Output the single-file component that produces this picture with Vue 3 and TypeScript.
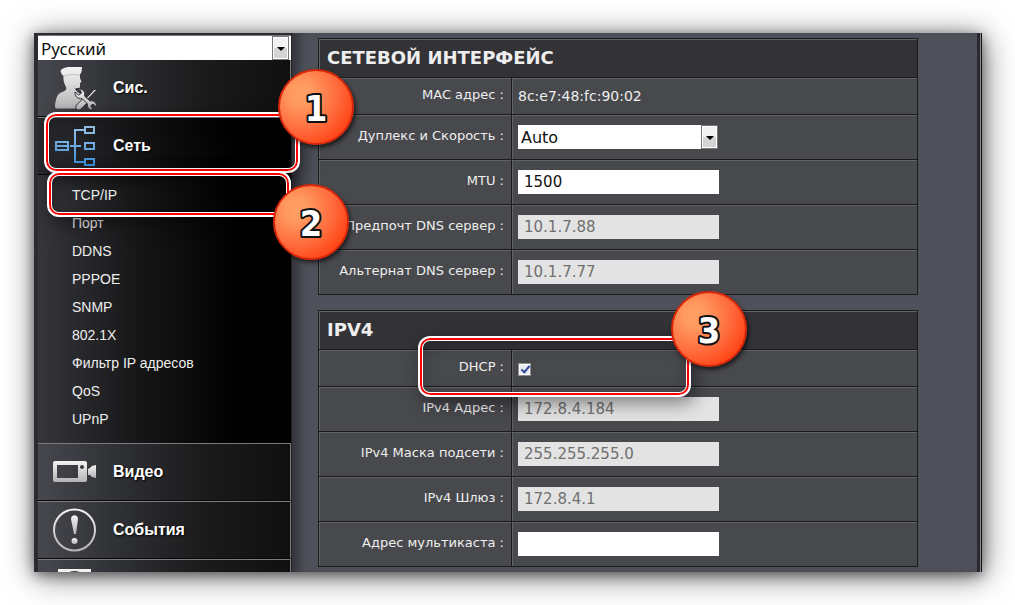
<script setup lang="ts">
import { ref } from 'vue'

interface Field {
  id: string
  label: string
  kind: 'text' | 'input' | 'select' | 'check'
  value: string
  disabled?: boolean
}
interface Section {
  title: string
  fields: Field[]
}

const language = ref('Русский')
const dhcp = ref(true)
const subItems: string[] = ['TCP/IP', 'Порт', 'DDNS', 'PPPOE', 'SNMP', '802.1X', 'Фильтр IP адресов', 'QoS', 'UPnP']

const sections = ref<Section[]>([
  {
    title: 'СЕТЕВОЙ ИНТЕРФЕЙС',
    fields: [
      { id: 'mac', label: 'MAC адрес :', kind: 'text', value: '8c:e7:48:fc:90:02' },
      { id: 'duplex', label: 'Дуплекс и Скорость :', kind: 'select', value: 'Auto' },
      { id: 'mtu', label: 'MTU :', kind: 'input', value: '1500' },
      { id: 'dns1', label: 'Предпочт DNS сервер :', kind: 'input', value: '10.1.7.88', disabled: true },
      { id: 'dns2', label: 'Альтернат DNS сервер :', kind: 'input', value: '10.1.7.77', disabled: true },
    ],
  },
  {
    title: 'IPV4',
    fields: [
      { id: 'dhcp', label: 'DHCP :', kind: 'check', value: '' },
      { id: 'ip', label: 'IPv4 Адрес :', kind: 'input', value: '172.8.4.184', disabled: true },
      { id: 'mask', label: 'IPv4 Маска подсети :', kind: 'input', value: '255.255.255.0', disabled: true },
      { id: 'gw', label: 'IPv4 Шлюз :', kind: 'input', value: '172.8.4.1', disabled: true },
      { id: 'mcast', label: 'Адрес мультикаста :', kind: 'input', value: '' },
    ],
  },
])
</script>

<template>
  <div class="page">
    <svg class="defs" width="0" height="0" aria-hidden="true">
      <defs>
        <linearGradient id="silver" x1="0" y1="0" x2="0" y2="1">
          <stop offset="0" stop-color="#f4f4f4" /><stop offset="1" stop-color="#b4b4b6" />
        </linearGradient>
        <linearGradient id="azure" gradientUnits="userSpaceOnUse" x1="0" y1="8" x2="0" y2="48">
          <stop offset="0" stop-color="#9cc4ea" /><stop offset="1" stop-color="#3a8fdc" />
        </linearGradient>
      </defs>
    </svg>
    <div class="frame">
      <nav class="sidebar">
        <div class="pick lang">
          <select v-model="language" aria-label="Язык">
            <option>Русский</option>
          </select>
          <span class="arrow"></span>
        </div>
        <button class="item first" type="button">
          <svg class="icon" width="46" height="56" viewBox="0 0 46 56" fill="url(#silver)">
            <path d="M8.500 11C10 8 14 7 18 7L30 7L29.500 12L28 14.500L28 18L29.500 22L28 23L28 27C27 29 25 28.500 23 28.500C24 31 26 33 29 34L35 40L24 48.500H5C3 48.500 3 47 3 45C4 39 5 34 9 32.500C13 31 15 30 14 27C12 23 11 20 11.500 16C10 15 9 13 8.500 11Z" />
            <g stroke="#303135" stroke-width="1">
              <path d="M42.500 29L44 30.500L35.500 39.500L36 42L29 49C26 51.500 22 48 24.500 45L31.500 38L34 38.500Z" />
              <path d="M24 28.500L28 29C32 30 33.500 33 32.500 36L38 41C42 40 45 43 44.500 47L41 44L38.500 46L41.500 49.500C37 50 35 47.500 35.500 44L30 38.500C26 39.500 22.500 36 23 32L26.500 35L29.500 33L28.500 30.500Z" />
            </g>
            <path d="M12 16Q20 13 28 15" fill="none" stroke="#c4c4c6" stroke-width="1" />
          </svg>
          <span>Сис.</span>
        </button>
        <div class="holder">
          <button class="item active" type="button">
            <svg class="icon" width="46" height="56" viewBox="0 0 46 56" fill="none" stroke="url(#azure)" stroke-width="2">
              <path d="M4 24H16V32H4ZM5 28H15M18 28H29M32 12H23V44H32M33 9H42V15H33ZM33 25H42V31H33ZM33 41H42V47H33Z" />
            </svg>
            <span>Сеть</span>
          </button>
          <div class="callout c1"><span class="badge"><svg width="76" height="76" viewBox="0 0 76 76"><text x="38" y="52">1</text></svg></span></div>
        </div>
        <ul class="sub">
          <li v-for="(s, i) in subItems" :key="s">
            <a href="#">{{ s }}</a>
            <div v-if="i === 0" class="callout c2"><span class="badge"><svg width="76" height="76" viewBox="0 0 76 76"><text x="38" y="52">2</text></svg></span></div>
          </li>
        </ul>
        <button class="item" type="button">
          <svg class="icon" width="46" height="56" viewBox="0 0 46 56" fill="url(#silver)">
            <path fill-rule="evenodd" d="M3 17H33Q35 17 35 19V36Q35 38 33 38H3Q1 38 1 36V19Q1 17 3 17ZM5 21V34H26V21ZM30 21A2 2 0 1 0 30.010 21Z" />
            <path d="M36 25L38 24L40 22L44 21V34L40 33L38 31L36 31Z" />
          </svg>
          <span>Видео</span>
        </button>
        <button class="item" type="button">
          <svg class="icon" width="46" height="56" viewBox="0 0 46 56" fill="url(#silver)">
            <circle cx="22.500" cy="28" r="20.500" fill="none" stroke="url(#silver)" stroke-width="2" />
            <path d="M19 17C19 12 26 12 26 17L24 32H22Z" /><circle cx="22.500" cy="39" r="3" />
          </svg>
          <span>События</span>
        </button>
        <button class="item" type="button" aria-label="Запись">
          <svg class="icon" width="46" height="56" viewBox="0 0 46 56" fill="url(#silver)">
            <path fill-rule="evenodd" d="M6 9H39V48H6ZM22.500 11A14 14 0 1 0 22.510 11Z" />
          </svg>
        </button>
      </nav>
      <main class="content">
        <table v-for="sec in sections" :key="sec.title">
          <colgroup>
            <col class="col-name" />
            <col />
          </colgroup>
          <thead>
            <tr><th colspan="2" scope="colgroup">{{ sec.title }}</th></tr>
          </thead>
          <tbody>
            <tr v-for="f in sec.fields" :key="f.id" :class="f.kind">
              <td class="name">
                <label :for="f.id">{{ f.label }}</label>
              </td>
              <td class="val">
                <output v-if="f.kind === 'text'" :id="f.id">{{ f.value }}</output>
                <div v-else-if="f.kind === 'select'" class="pick">
                  <select :id="f.id" v-model="f.value">
                    <option>Auto</option>
                  </select>
                  <span class="arrow"></span>
                </div>
                <template v-else-if="f.kind === 'check'">
                  <input :id="f.id" v-model="dhcp" type="checkbox" />
                  <div class="callout c3"><span class="badge"><svg width="76" height="76" viewBox="0 0 76 76"><text x="38" y="52">3</text></svg></span></div>
                </template>
                <input v-else :id="f.id" v-model="f.value" type="text" :disabled="f.disabled" />
              </td>
            </tr>
          </tbody>
        </table>
      </main>
    </div>
  </div>
</template>

<style>
body {
  margin: 0;
  background: #fff;
}
</style>

<style scoped>
* {
  box-sizing: border-box;
}
.page {
  display: flex;
  height: 100vh;
  padding: 33px 33px 33px 34px;
  overflow: hidden;
  font-family: "DejaVu Sans", Verdana, sans-serif;
}
.defs {
  position: absolute;
}
.frame {
  flex: 1;
  display: flex;
  min-width: 0;
  border-left: 4px solid #2b2c31;
  border-right: 1px solid #111;
  background: #8a8b90;
  box-shadow: 2px 4px 30px rgba(0, 0, 0, 0.55), 0 3px 12px rgba(0, 0, 0, 0.45);
}
.sidebar {
  position: relative;
  z-index: 2;
  flex: 0 0 254px;
  display: flex;
  flex-direction: column;
  padding-top: 3px;
  border-right: 1px solid #222326;
  background: #2b2c31;
  max-height: 100%;
  clip-path: inset(0 -80px 0 0);
}
.pick {
  position: relative;
  width: 200px;
  height: 24px;
}
.pick.lang {
  flex: none;
  width: 100%;
  box-shadow: 0 -1px 0 #77787c;
}
.pick select {
  display: block;
  width: 100%;
  height: 24px;
  margin: 0;
  padding: 0 20px 0 3px;
  border: 0;
  border-radius: 0;
  appearance: none;
  background: #fff;
  color: #111;
  font: 16px "DejaVu Sans", sans-serif;
}
.pick.lang select {
  font: 17px "Noto Sans", sans-serif;
}
.arrow {
  position: absolute;
  top: 0;
  right: 0;
  width: 17px;
  height: 24px;
  border: 1px solid #777;
  box-shadow: inset 0 0 0 1px #fff;
  background: linear-gradient(#f2f2f2 50%, #d4d4d4 50%);
  pointer-events: none;
}
.lang .arrow {
  right: 2px;
}
.arrow::after {
  content: "";
  position: absolute;
  top: 10px;
  left: 4px;
  border: 4px solid transparent;
  border-top-color: #000;
  border-bottom: 0;
}
.item {
  flex: none;
  display: flex;
  align-items: center;
  width: 100%;
  padding: 0 0 0 14px;
  gap: 15px;
  border: 0;
  border-top: 1px solid #7b7b7f;
  border-bottom: 1px solid #09090a;
  border-right: 1px solid #77787c;
  border-radius: 0;
  background: linear-gradient(90deg, #47484e, #2b2c30 38%, #1b1b1c 65%, #101010);
  color: #fff;
  font: bold 16px/20px "Liberation Sans", Arial, sans-serif;
  text-align: left;
  text-shadow: 1px 1px 2px #000;
}
.item.first {
  border-top: 0;
}
.item.active {
  border-right-color: #000;
  background: linear-gradient(90deg, #2b2c30, #0d0d0e 50%, #000 80%);
}
.icon {
  flex: none;
  display: block;
}
.holder {
  position: relative;
  z-index: 2;
}
.sub {
  flex: none;
  margin: 0;
  padding: 6px 0 10px;
  list-style: none;
  background: linear-gradient(90deg, #35363b, #161617 40%, #000 80%);
}
.sub li {
  position: relative;
  height: 28px;
  padding-left: 34px;
}
.sub li:first-child {
  z-index: 3;
}
.sub a {
  color: #eee;
  font: 14px/28px "Liberation Sans", Arial, sans-serif;
  text-decoration: none;
}
.callout {
  position: absolute;
  border: 2px solid #fff;
  border-radius: 12px;
  box-shadow: inset 0 0 0 2px #f00, inset 0 0 0 3px #fff, 4px 6px 18px rgba(0, 0, 0, 0.45), inset 0 4px 18px rgba(0, 0, 0, 0.3);
  pointer-events: none;
}
.c1 {
  inset: -5px -9px 2px 6px;
}
.c2 {
  inset: -10px 0 -8px 9px;
}
.c3 {
  inset: -14px auto -11px -94px;
  width: 273px;
}
.badge {
  position: absolute;
  width: 76px;
  height: 76px;
  border: 2px solid #d8260a;
  border-radius: 50%;
  background: radial-gradient(circle at 30% 32%, #ffa066 0, #ff9a60 16%, #ff6a3c 52%, #ff3808 88%);
  box-shadow: 2px 3px 4px rgba(0, 0, 0, 0.6);
}
.badge svg {
  display: block;
  margin: -2px;
}
.badge text {
  fill: #fff;
  stroke: #111;
  stroke-width: 4px;
  stroke-linejoin: round;
  paint-order: stroke;
  font: bold 36px "DejaVu Sans Condensed", "DejaVu Sans", sans-serif;
  text-anchor: middle;
}
.c1 .badge {
  right: -56px;
  top: -45px;
}
.c2 .badge {
  right: -60px;
  top: 11px;
}
.c3 .badge {
  right: -58px;
  top: -47px;
}
.content {
  flex: 1;
  min-width: 0;
  margin-right: 1px;
  padding: 5px 59px 0 26px;
  border-right: 3px solid #292a2f;
  background: #4f515a;
  box-shadow: inset 14px 0 12px -8px #303137;
}
table {
  width: 100%;
  margin-bottom: 15px;
  border: solid #1b1b1c;
  border-width: 0 1px 1px 0;
  border-spacing: 0;
  table-layout: fixed;
  color: #eee;
  font-size: 13px;
}
.col-name {
  width: 193px;
}
th,
td {
  height: 45px;
  padding: 0;
  border: solid #1b1b1c;
  border-width: 1px 0 0 1px;
  background: #48494d;
  box-shadow: inset 1px 1px 0 #626365;
}
th {
  height: 39px;
  padding-left: 8px;
  background: #323237;
  font-size: 18px;
  line-height: 22px;
  text-align: left;
}
.text td,
.check td {
  height: 37px;
}
.name {
  padding: 0 7px 3px 0;
  text-align: right;
}
.val {
  position: relative;
  padding-left: 6px;
}
.check .val {
  z-index: 2;
}
output {
  font-size: 14px;
  line-height: 18px;
}
input[type="text"] {
  display: block;
  width: 201px;
  height: 24px;
  margin: 0;
  padding: 0 6px;
  border: 0;
  background: #fff;
  color: #111;
  font: 15px "DejaVu Sans", sans-serif;
}
input[type="text"]:disabled {
  background: #e3e3e3;
  color: #707070;
}
input[type="checkbox"] {
  display: block;
  width: 13px;
  height: 13px;
  margin: 3px 0 0;
  appearance: none;
  border: 1px solid #8f8f8f;
  background: #e8eaf0;
  box-shadow: inset 0 0 0 1px #fff;
}
input[type="checkbox"]:checked::after {
  content: "";
  display: block;
  width: 3px;
  height: 7px;
  margin: 0 0 0 4px;
  border: solid #34489c;
  border-width: 0 2px 2px 0;
  transform: rotate(40deg);
}
</style>
